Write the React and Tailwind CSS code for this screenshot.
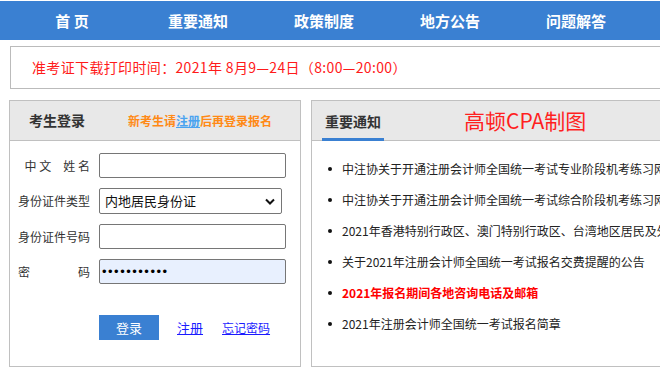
import React from 'react';

const navItems = ['首 页', '重要通知', '政策制度', '地方公告', '问题解答'];

const news = [
  { text: '中注协关于开通注册会计师全国统一考试专业阶段机考练习网站的公告' },
  { text: '中注协关于开通注册会计师全国统一考试综合阶段机考练习网站的公告' },
  { text: '2021年香港特别行政区、澳门特别行政区、台湾地区居民及外国籍公民报名须知' },
  { text: '关于2021年注册会计师全国统一考试报名交费提醒的公告' },
  { text: '2021年报名期间各地咨询电话及邮箱', hot: true },
  { text: '2021年注册会计师全国统一考试报名简章' },
];

const font = { fontFamily: '"Noto Sans CJK SC", "Noto Sans", sans-serif' };

const Label = ({ children }) => (
  <div className="ml-[8px] w-[72px] shrink-0 text-right text-[12px] text-[#333] whitespace-pre">
    {children}
  </div>
);

const LoginPanel = () => (
  <div className="w-[292px] h-[267px] shrink-0 border border-[#c0c0c0]">
    <div className="h-[40px] bg-[#e8e8e8] border-b border-[#c0c0c0] flex items-center">
      <span className="ml-[19px] text-[14px] font-bold text-[#333]">考生登录</span>
      <span className="ml-[43px] text-[12px] font-bold text-[#ff8a16]">
        新考生请<a href="#" className="text-[#4aa3f0] underline">注册</a>后再登录报名
      </span>
    </div>
    <div className="pt-[12px] flex flex-col gap-[10px]">
      <div className="flex items-center">
        <Label>{'中 文　姓 名'}</Label>
        <input className="ml-[9px] w-[187px] h-[25px] border border-[#767676] rounded-[2px] bg-white outline-none" />
      </div>
      <div className="flex items-center">
        <Label>身份证件类型</Label>
        <div className="ml-[9px] w-[183px] h-[26px] border border-[#767676] rounded-[2px] bg-white flex items-center justify-between pl-[5px] pr-[6px]">
          <span className="text-[13px] text-[#111]">内地居民身份证</span>
          <svg width="10" height="7" viewBox="0 0 10 7">
            <path d="M1 1.5 L5 5.5 L9 1.5" fill="none" stroke="#111" strokeWidth="2" />
          </svg>
        </div>
      </div>
      <div className="flex items-center">
        <Label>身份证件号码</Label>
        <input className="ml-[9px] w-[187px] h-[25px] border border-[#767676] rounded-[2px] bg-white outline-none" />
      </div>
      <div className="flex items-center">
        <div className="ml-[8px] w-[72px] shrink-0 flex justify-between text-[12px] text-[#333]">
          <span>密</span>
          <span>码</span>
        </div>
        <input
          type="password"
          defaultValue="12345678901"
          className="ml-[9px] w-[187px] h-[25px] border border-[#767676] rounded-[2px] bg-[#e8f0fe] px-[2px] font-['Liberation_Sans'] text-[13px] tracking-[1.5px] text-black outline-none"
        />
      </div>
    </div>
    <div className="mt-[31px] ml-[89px] flex items-center">
      <button className="w-[60px] h-[25px] bg-[#3a80d2] text-white text-[13px]">登录</button>
      <a href="#" className="ml-[18px] text-[13px] text-[#1a1aff] underline">注册</a>
      <a href="#" className="ml-[19px] text-[12px] text-[#1a1aff] underline">忘记密码</a>
    </div>
  </div>
);

const NewsPanel = () => (
  <div className="w-[349px] h-[267px] shrink-0 border border-[#c0c0c0] border-r-0 overflow-hidden">
    <div className="h-[40px] bg-[#e8e8e8] border-b border-[#c0c0c0] flex items-stretch">
      <div className="ml-[10px] w-[62px] flex items-center justify-center border-b-[3px] border-[#3a80d2] mb-[-1px] pt-[3px]">
        <span className="text-[14px] font-bold text-[#333]">重要通知</span>
      </div>
      <div className="ml-[80px] flex items-center">
        <span className="text-[21px] text-[#ff1f1f] leading-none">高顿CPA制图</span>
      </div>
    </div>
    <div className="pt-[12px]">
      {news.map((n) => (
        <div key={n.text} className="h-[31px] flex items-center whitespace-nowrap">
          <span className="ml-[16px] w-[4px] h-[4px] rounded-full bg-[#111] shrink-0" />
          <span className={`ml-[10px] text-[12px] ${n.hot ? 'font-bold text-[#ff0000]' : 'text-[#222]'}`}>
            {n.text}
          </span>
        </div>
      ))}
    </div>
  </div>
);

export default function App() {
  return (
    <div className="w-[660px] h-[377px] overflow-hidden bg-white" style={font}>
      <div className="mt-[1px] h-[39px] bg-[#3a80d2] flex pl-[9px]">
        {navItems.map((item) => (
          <div key={item} className="w-[126px] shrink-0 flex items-center justify-center pt-[2px] text-[15px] font-bold text-white whitespace-pre">
            {item}
          </div>
        ))}
      </div>
      <div className="mt-[6px] ml-[10px] w-[650px] h-[43px] border border-[#bbb] border-r-0 flex items-center pl-[21px]">
        <span className="text-[14px] tracking-[0.35px] text-[#ff1a1a]">准考证下载打印时间：2021年 8月9—24日（8:00—20:00）</span>
      </div>
      <div className="mt-[11px] ml-[9px] flex gap-[10px]">
        <LoginPanel />
        <NewsPanel />
      </div>
    </div>
  );
}
